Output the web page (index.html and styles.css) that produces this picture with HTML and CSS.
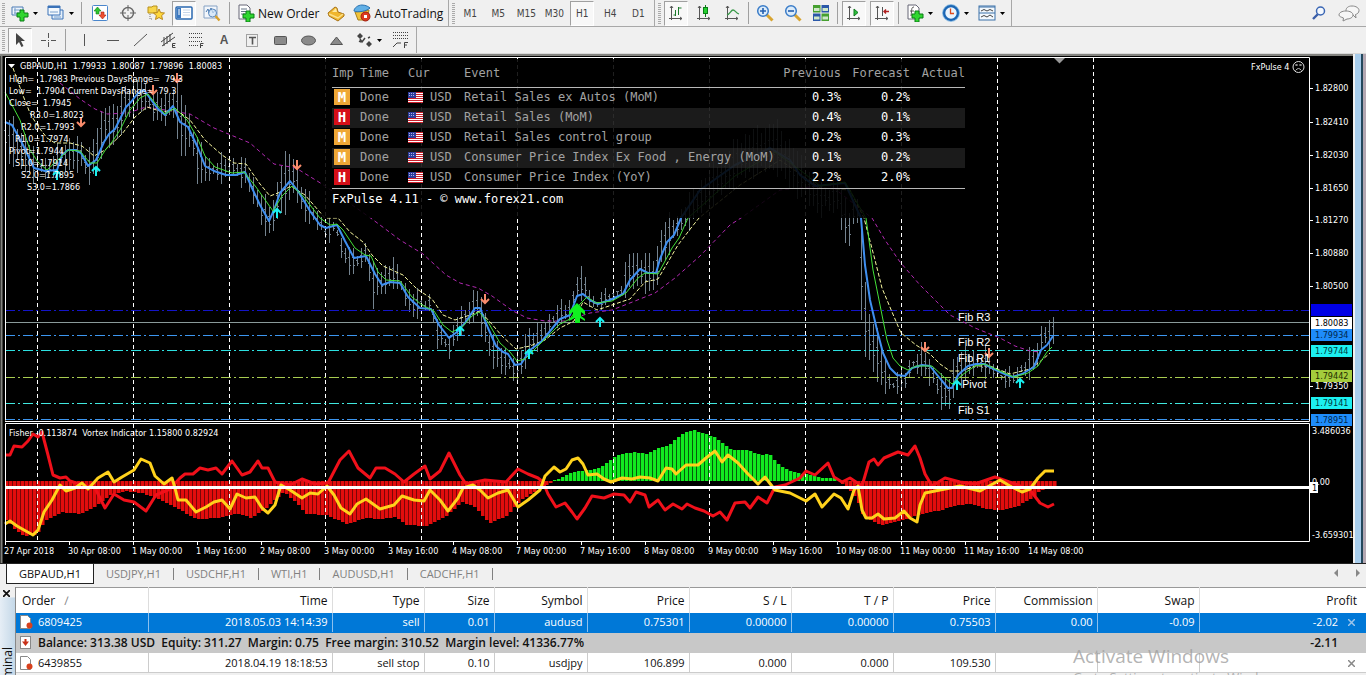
FILE: index.html
```html
<!DOCTYPE html>
<html lang="en">
<head>
<meta charset="utf-8">
<title>GBPAUD,H1</title>
<link rel="stylesheet" href="styles.css">
</head>
<body>
<header class="toolbars">
  <div class="bar">
    <div class="group">
      <i class="grip"></i>
      <button class="tool drop" aria-label="New chart"><svg class="ic" viewBox="0 0 18 18"><path d="M1 3h11v8H1z" fill="#eef5fc" stroke="#4a7ab5"/><path d="M3 6h7M3 9h5M4 4v6" stroke="#7aa0cc"/><path d="M9 6h4v3h4v4h-4v4H9v-4H6V9h3z" fill="#2fd62f" stroke="#0a7d16"/></svg><svg class="caret" viewBox="0 0 5 3"><path d="M0 0h5L2.500 3z"/></svg></button>
      <button class="tool drop" aria-label="Profiles"><svg class="ic" viewBox="0 0 18 18"><path d="M5 6h11v9H5z" fill="#e4effa" stroke="#3a72b8"/><path d="M1 2h12v9H1z" fill="#f3f8fd" stroke="#3a72b8"/><path d="M1 3h12" stroke="#3a72b8" stroke-width="2"/><path d="M3 8h8M7 13h7" stroke="#7aa0cc"/></svg><svg class="caret" viewBox="0 0 5 3"><path d="M0 0h5L2.500 3z"/></svg></button>
      <i class="sep"></i>
      <button class="tool" aria-label="Market Watch"><svg class="ic" viewBox="0 0 18 18"><rect x="1.500" y="1.500" width="15" height="15" rx="1" fill="#fff" stroke="#4a86cc"/><path d="M5 10V7H3l3.500-4L10 7H8v3z" fill="#2ec42e" stroke="#14801a" stroke-width=".6"/><path d="M10 8v3H8l3.500 4L15 11h-2V8z" fill="#f05030" stroke="#a82010" stroke-width=".6"/></svg></button>
      <button class="tool" aria-label="Data Window"><svg class="ic" viewBox="0 0 18 18" fill="none" stroke="#666"><circle cx="9" cy="9" r="5.500" stroke-width="1.400"/><path d="M9 1v6M9 11v6M1 9h6M11 9h6"/></svg></button>
      <button class="tool" aria-label="Navigator"><svg class="ic" viewBox="0 0 18 18"><path d="M1 3h4l1-1h4v7H1z" fill="#f8d64a" stroke="#b8901a"/><path d="M3 10v5h3" fill="none" stroke="#777" stroke-dasharray="1 1"/><path d="M12 5l1.600 3.600 3.900.4-2.900 2.600.9 3.900-3.500-2-3.500 2 .9-3.900L6.500 9l3.900-.4z" fill="#ffd83c" stroke="#b8861a"/></svg></button>
      <button class="tool on" aria-label="Terminal" aria-pressed="true"><svg class="ic" viewBox="0 0 18 18"><rect x="1" y="3" width="16" height="12" rx="1" fill="#fff" stroke="#2a68b0" stroke-width="1.500"/><path d="M2 4h4v10H2z" fill="#3a78c0"/><path d="M3 6h2M3 8h2M3 10h2" stroke="#fff"/><path d="M8 6h7M8 8.500h7M8 11h7" stroke="#b8cce4" stroke-width=".8"/></svg></button>
      <button class="tool" aria-label="Strategy Tester"><svg class="ic" viewBox="0 0 18 18"><path d="M1 2h13v12H1z" fill="#f2f6fb" stroke="#86a2c4"/><path d="M3 8l2-3 1 4 2-5 2 5 2-3" fill="none" stroke="#4878b0"/><circle cx="9.500" cy="9" r="4" fill="#cfe4f8" fill-opacity=".7" stroke="#5a88bc"/><path d="M12.500 12l4 4.500" stroke="#d8a02a" stroke-width="2.400"/></svg></button>
      <i class="sep"></i>
      <button class="tool label"><svg class="ic" viewBox="0 0 18 18"><path d="M2 1h8l3 3v11H2z" fill="#fff" stroke="#667"/><path d="M4 5h6M4 7.500h6M4 10h4" stroke="#678"/><path d="M9 7h4v3h4v4h-4v4H9v-4H6v-4h3z" fill="#2fd62f" stroke="#0a7d16"/></svg>New Order</button>
      <button class="tool" aria-label="MetaEditor"><svg class="ic" viewBox="0 0 18 18"><path d="M1 9l7-6 2 1 1 4 6 2v2l-6 5-9-5z" fill="#f0b62c" stroke="#a8741a"/><path d="M2 10l9 4 5-4" fill="none" stroke="#fbe08a" stroke-width="1.500"/><path d="M5 8l4-4 1 4z" fill="#fde9a0"/></svg></button>
      <button class="tool label"><svg class="ic" viewBox="0 0 18 18"><path d="M2 8l14-2-2 10H5z" fill="#f2c43a" stroke="#a8801a"/><path d="M1 7c0-3 4-6 8-6s7 2 8 3c-3 3-12 5-16 3z" fill="#62b0e6" stroke="#2a72b0"/><circle cx="12.500" cy="12.500" r="4.500" fill="#dc3a1e" stroke="#a02010"/><rect x="11" y="11" width="3" height="3" fill="#fff"/></svg>AutoTrading</button>
    </div>
    <div class="group">
      <i class="grip"></i>
      <button class="tool tf">M1</button><button class="tool tf">M5</button><button class="tool tf">M15</button><button class="tool tf">M30</button><button class="tool tf on" aria-pressed="true">H1</button><button class="tool tf">H4</button><button class="tool tf">D1</button>
    </div>
    <div class="group">
      <i class="grip"></i>
      <button class="tool on" aria-label="Bar chart" aria-pressed="true"><svg class="ic" viewBox="0 0 18 18" fill="none" stroke="#555"><path d="M4.500 2v14M2 14.500h13M3 4l1.500-2L6 4M13 13l2 1.500-2 1.500"/><path d="M8.500 6v6M6.500 11h2M11.500 3v8M11.500 4h3" stroke="#1c7a2c"/></svg></button>
      <button class="tool" aria-label="Candlesticks"><svg class="ic" viewBox="0 0 18 18" fill="none" stroke="#555"><path d="M4.500 2v14M2 14.500h13M3 4l1.500-2L6 4M13 13l2 1.500-2 1.500"/><path d="M10.500 1v12" stroke="#0a7d16"/><rect x="8.500" y="3.500" width="4" height="6" fill="#24d030" stroke="#0a7d16"/></svg></button>
      <button class="tool" aria-label="Line chart"><svg class="ic" viewBox="0 0 18 18" fill="none" stroke="#555"><path d="M4.500 2v14M2 14.500h13M3 4l1.500-2L6 4M13 13l2 1.500-2 1.500"/><path d="M4 11c3-1 4-5 6-5s3 3 6 4" stroke="#3a9a4a" stroke-width="1.300"/></svg></button>
      <i class="sep thin"></i>
      <button class="tool" aria-label="Zoom in"><svg class="ic" viewBox="0 0 18 18"><path d="M10.500 10.500l6 6" stroke="#d8a430" stroke-width="3"/><circle cx="7" cy="7" r="5.300" fill="#dcecfa" stroke="#3a7cc8" stroke-width="1.500"/><path d="M4 7h6M7 4v6" stroke="#2460b0" stroke-width="1.600"/></svg></button>
      <button class="tool" aria-label="Zoom out"><svg class="ic" viewBox="0 0 18 18"><path d="M10.500 10.500l6 6" stroke="#d8a430" stroke-width="3"/><circle cx="7" cy="7" r="5.300" fill="#dcecfa" stroke="#3a7cc8" stroke-width="1.500"/><path d="M4 7h6" stroke="#2460b0" stroke-width="1.600"/></svg></button>
      <button class="tool" aria-label="Tile windows"><svg class="ic" viewBox="0 0 18 18"><path d="M1 1h7.500v7.500H1zM9.500 9.500H17V17H9.500z" fill="#46a030"/><path d="M9.500 1H17v7.500H9.500zM1 9.500h7.500V17H1z" fill="#2a58a8"/><path d="M2 4h5.500v3H2zM10.500 4H16v3h-5.500zM2 12.500h5.500v3H2zM10.500 12.500H16v3h-5.500z" fill="#cfe8c8"/></svg></button>
      <i class="sep thin"></i>
      <button class="tool on" aria-label="Auto scroll" aria-pressed="true"><svg class="ic" viewBox="0 0 18 18" fill="none" stroke="#555"><path d="M4.500 2v14M2 14.500h13M3 4l1.500-2L6 4M13 13l2 1.500-2 1.500"/><path d="M9 5l4 3.500L9 12z" fill="#2cc03a" stroke="#127a20"/></svg></button>
      <button class="tool on" aria-label="Chart shift" aria-pressed="true"><svg class="ic" viewBox="0 0 18 18" fill="none" stroke="#555"><path d="M4.500 2v14M2 14.500h13M3 4l1.500-2L6 4M13 13l2 1.500-2 1.500M9.500 3v9"/><path d="M11 7.500h5M13 5.500l-2 2 2 2" stroke="#b02020" stroke-width="1.400"/></svg></button>
      <i class="sep thin"></i>
      <button class="tool drop" aria-label="Indicators"><svg class="ic" viewBox="0 0 18 18"><path d="M2 1h8l3 3v11H2z" fill="#fff" stroke="#667"/><path d="M8 3c-3 0-2 3-3 9M4 7h4" fill="none" stroke="#555"/><path d="M9 7h4v3h4v4h-4v4H9v-4H6v-4h3z" fill="#2fd62f" stroke="#0a7d16"/></svg><svg class="caret" viewBox="0 0 5 3"><path d="M0 0h5L2.500 3z"/></svg></button>
      <button class="tool drop" aria-label="Periods"><svg class="ic" viewBox="0 0 18 18"><circle cx="9" cy="9" r="7" fill="#eaf4fd" stroke="#1c66b4" stroke-width="2.600"/><circle cx="9" cy="9" r="8.400" fill="none" stroke="#6aaade" stroke-width=".7"/><path d="M8.500 4.500V9.500H12" fill="none" stroke="#e04a1c" stroke-width="1.300"/></svg><svg class="caret" viewBox="0 0 5 3"><path d="M0 0h5L2.500 3z"/></svg></button>
      <button class="tool drop" aria-label="Templates"><svg class="ic" viewBox="0 0 18 18"><rect x="1" y="2" width="16" height="14" fill="#f4f9fd" stroke="#3a70a8"/><path d="M1 3h16M1 9h16" stroke="#3a70a8"/><path d="M3 7l3-1.500L9 7l3-1.500L15 7M3 13l3-1.500L9 13l3-2 3 2" fill="none" stroke="#444"/></svg><svg class="caret" viewBox="0 0 5 3"><path d="M0 0h5L2.500 3z"/></svg></button>
    </div>
    <div class="right">
      <button class="tool" aria-label="Search"><svg class="ic" viewBox="0 0 18 18" fill="none"><path d="M8 10l-5 5" stroke="#3a5ea8" stroke-width="2.400"/><circle cx="10.500" cy="7" r="4" fill="#f4f8fd" stroke="#3a66b4" stroke-width="1.500"/></svg></button>
      <button class="tool" aria-label="Community"><svg class="ic big" viewBox="0 0 22 18" fill="#f6f6f6" stroke="#888"><path d="M14 2c4 0 7 2 7 4.500S19 10 17.500 10.500L18 14l-3-3c-5 0-7-2-7-4.500S10 2 14 2z"/><path d="M8 7c4 0 7 1.600 7 4s-3 4-6 4l-4 2 .5-3C3 13 1 12.500 1 11c0-2.400 3-4 7-4z"/></svg></button>
    </div>
  </div>
  <div class="bar">
    <div class="group">
      <i class="grip"></i>
      <button class="tool on" aria-label="Cursor" aria-pressed="true"><svg class="ic" viewBox="0 0 18 18"><path d="M5 2v12l3-3 2.500 5 2-1L10 10h4z" fill="#444"/></svg></button>
      <button class="tool" aria-label="Crosshair"><svg class="ic" viewBox="0 0 18 18" stroke="#555"><path d="M9.500 2v5M9.500 11v5M2 9.500h5M12 9.500h5M9 9.500h1"/></svg></button>
      <i class="sep"></i>
      <button class="tool" aria-label="Vertical line"><svg class="ic" viewBox="0 0 18 18" stroke="#555"><path d="M9.500 3v12"/></svg></button>
      <button class="tool" aria-label="Horizontal line"><svg class="ic" viewBox="0 0 18 18" stroke="#555"><path d="M4 9.500h12"/></svg></button>
      <button class="tool" aria-label="Trendline"><svg class="ic" viewBox="0 0 18 18" stroke="#555"><path d="M3 15L16 3"/></svg></button>
      <button class="tool" aria-label="Equidistant channel"><svg class="ic" viewBox="0 0 18 18" stroke="#444" fill="none"><path d="M2 11L14 2M3 15L16 6M5 6v9M8 5v8M11 3v8"/><path d="M16.500 12.500h-3v4h3M13.500 14.500h2.500"/></svg></button>
      <button class="tool" aria-label="Fibonacci"><svg class="ic" viewBox="0 0 18 18" stroke="#444" fill="none"><path d="M2 2.500h14M2 6.500h14M2 10.500h14M2 14.500h9" stroke-dasharray="1 1"/><path d="M13.500 17v-4.500h3M13.500 14.500H16"/></svg></button>
      <button class="tool glyph">A</button>
      <button class="tool" aria-label="Text label"><svg class="ic" viewBox="0 0 18 18" stroke="#555" fill="none"><rect x="3.500" y="3.500" width="11" height="12" stroke-dasharray="1 1"/><path d="M6 6.500h7M9.500 6.500v7" stroke-width="1.600"/></svg></button>
      <button class="tool" aria-label="Rectangle"><svg class="ic" viewBox="0 0 18 18"><rect x="3.500" y="5.500" width="12" height="8" rx="1" fill="#8a8a8a" stroke="#555"/></svg></button>
      <button class="tool" aria-label="Ellipse"><svg class="ic" viewBox="0 0 18 18"><ellipse cx="9.500" cy="9.500" rx="7" ry="4.500" fill="#8a8a8a" stroke="#555"/></svg></button>
      <button class="tool" aria-label="Triangle"><svg class="ic" viewBox="0 0 18 18"><path d="M9.500 6L15.500 13.500h-12z" fill="#8a8a8a" stroke="#555"/></svg></button>
      <button class="tool drop" aria-label="Arrows"><svg class="ic" viewBox="0 0 18 18" fill="#444"><path d="M2 5l3-3 3 3-3 3zM11 13l3-3 3 3-3 3z"/><path d="M5 8l2 3 3-4M13 7l2-1M4 10l2 1" fill="none" stroke="#444" stroke-width="1.500"/></svg><svg class="caret" viewBox="0 0 5 3"><path d="M0 0h5L2.500 3z"/></svg></button>
      <button class="tool" aria-label="Fibonacci channel"><svg class="ic" viewBox="0 0 18 18" stroke="#444" fill="none"><path d="M2 1.500h15M2 4.500h15M2 7.500h15" stroke-dasharray="1 1"/><path d="M2 16l4-4h4M13.500 17v-5.500h3.500M13.500 14H16"/></svg></button>
    </div>
  </div>
</header>

<main class="chart">
  <svg class="plot" viewBox="0 54 1353 509" role="img" aria-label="GBPAUD H1 price chart">
    <defs>
      <g id="down"><path d="M0-5V3M-4 0L0 4L4 0" fill="none" stroke="#fa8c6c" stroke-width="2"/></g>
      <g id="up"><path d="M0 5V-3M-4 0L0-4L4 0" fill="none" stroke="#19f0f0" stroke-width="2"/></g>
    </defs>
    <rect x="0" y="54" width="1353" height="509" fill="#000"/>
    <path d="M0 55h1353M1.500 54v509" stroke="#83837f" stroke-width="2" fill="none"/>
    <g id="bars" stroke="#74838f"></g>
    <g id="hist"></g>
    <g id="grid" stroke="#fff" stroke-dasharray="4 3"></g>
    <g id="levels" fill="none" stroke-dasharray="10 3 2 3"></g>
    <g id="lines" fill="none" stroke-linejoin="round"></g>
    <path d="M5 487.500h1306" stroke="#fff" stroke-width="3"/>
    <g id="marks"></g>
    <path d="M577 303l8 8v4l-4-3v4l4 3v2l-5-3v5h-5v-5l-6 3v-2l4-3v-4l-4 3v-4z" fill="#10f020"/>
    <path d="M5.500 541V423.500H1309.500V541.500H5M5.500 420.500V57.500H1309.500V421.500H5" fill="none" stroke="#fff"/>
    <path d="M1054 58h11l-5.500 5.500z" fill="#999"/>
    <path d="M8 64h7l-3.500 4z" fill="#fff"/>
    <g fill="none" stroke="#ddd"><circle cx="1298.500" cy="67" r="5.500"/><path d="M1295.500 64l2 2m0-2l-2 2M1299.500 64l2 2m0-2l-2 2M1295.500 70.500q3-4 6 0" stroke-width=".8"/></g>
    <g class="small" id="labels"></g>
    <g class="fib" fill="#fff"><text x="958" y="321">Fib R3</text><text x="958" y="346">Fib R2</text><text x="958" y="362">Fib R1</text><text x="962" y="388">Pivot</text><text x="958" y="414">Fib S1</text></g>
  </svg>
  <section class="news">
    <table>
      <colgroup><col class="c-imp"><col class="c-time"><col class="c-cur"><col><col class="c-prev"><col class="c-fore"><col class="c-act"></colgroup>
      <thead><tr><th>Imp</th><th>Time</th><th>Cur</th><th>Event</th><th class="num">Previous</th><th class="num">Forecast</th><th class="num">Actual</th></tr></thead>
      <tbody id="news"></tbody>
    </table>
    <p>FxPulse 4.11 - © www.forex21.com</p>
  </section>
  <aside class="edge"></aside>
</main>

<nav class="tabs">
  <button class="tab active">GBPAUD,H1</button><button class="tab">USDJPY,H1</button><button class="tab">USDCHF,H1</button><button class="tab">WTI,H1</button><button class="tab">AUDUSD,H1</button><button class="tab">CADCHF,H1</button>
  <span class="scroll"><svg viewBox="0 0 26 8"><path d="M4 0v8L0 4zM22 0v8l4-4z" fill="#888"/></svg></span>
</nav>

<section class="terminal">
  <div class="side"><button class="close" aria-label="Close"><svg viewBox="0 0 6 6"><path d="M0 0l6 6M6 0L0 6" stroke="#111" stroke-width="1.500"/></svg></button><div class="side-title">Terminal</div></div>
  <table class="orders">
    <colgroup><col class="w-order"><col class="w-time"><col class="w-type"><col class="w-size"><col class="w-sym"><col class="w-p"><col class="w-p"><col class="w-p"><col class="w-p"><col class="w-p"><col class="w-p"><col></colgroup>
    <thead><tr><th class="first">Order <span class="sort">∕</span></th><th>Time</th><th>Type</th><th>Size</th><th>Symbol</th><th>Price</th><th>S / L</th><th>T / P</th><th>Price</th><th>Commission</th><th>Swap</th><th class="last">Profit</th></tr></thead>
    <tbody>
      <tr class="sel"><td class="first"><svg class="doc" viewBox="0 0 14 14"><path d="M1.500.5h7l3 3v10h-10z" fill="#fff" stroke="#888"/><circle cx="10.500" cy="10.500" r="3" fill="#d8401c"/></svg>6809425</td><td>2018.05.03 14:14:39</td><td>sell</td><td>0.01</td><td>audusd</td><td>0.75301</td><td>0.00000</td><td>0.00000</td><td>0.75503</td><td>0.00</td><td>-0.09</td><td class="pl">-2.02<svg class="x" viewBox="0 0 7 7"><path d="M0 0l7 7M7 0L0 7" stroke="#9cc4ea" stroke-width="1.500"/></svg></td></tr>
      <tr class="bal"><td class="first" colspan="11"><svg class="doc" viewBox="0 0 14 14"><rect x="1.500" y=".5" width="10" height="12" fill="#fff" stroke="#888"/><path d="M5.500 3h2v2.500H10L6.500 10 3 5.500h2.500z" fill="#c83018"/></svg>Balance: 313.38 USD&nbsp; Equity: 311.27&nbsp; Margin: 0.75&nbsp; Free margin: 310.52&nbsp; Margin level: 41336.77%</td><td class="pl">-2.11</td></tr>
      <tr><td class="first"><svg class="doc" viewBox="0 0 14 14"><path d="M1.500.5h7l3 3v10h-10z" fill="#fff" stroke="#888"/><circle cx="10.500" cy="10.500" r="3" fill="#d8401c"/></svg>6439855</td><td>2018.04.19 18:18:53</td><td>sell stop</td><td>0.10</td><td>usdjpy</td><td>106.899</td><td>0.000</td><td>0.000</td><td>109.530</td><td></td><td></td><td class="pl"><svg class="x" viewBox="0 0 7 7"><path d="M0 0l7 7M7 0L0 7" stroke="#888" stroke-width="1.500"/></svg></td></tr>
    </tbody>
  </table>
  <div class="watermark"><b>Activate Windows</b><span>Go to Settings to activate Windows.</span></div>
</section>
<script src="chart.js"></script>
</body>
</html>
```
FILE: styles.css
```css
* { box-sizing: border-box; }
body { margin: 0; height: 100vh; overflow: hidden; display: flex; flex-direction: column; background: #f0f0f0; color: #111; font: 12px "Open Sans", sans-serif; }
button { font: inherit; color: inherit; background: none; border: 0; padding: 0; }

.toolbars { flex: none; }
.bar { display: flex; height: 27px; border-bottom: 1px solid #a8a8a8; }
.bar + .bar { border-bottom-color: #d8d8d8; }
.group { display: flex; align-items: center; padding-right: 2px; margin-right: 1px; border-right: 1px solid #a8a8a8; }
.grip { width: 3px; height: 21px; margin: 0 1px 0 2px; background: repeating-linear-gradient(#aaa 0 1px, #f0f0f0 1px 2px); }
.sep { width: 1px; height: 22px; margin: 0 4px 0 3px; background: #a0a0a0; }
.sep.thin { margin: 0 2px; }
.tool { flex: none; width: 28px; height: 25px; display: flex; align-items: center; justify-content: center; }
.tool.on { background: #f8f8f8; border: 1px solid #a0a0a0; border-right-color: #fff; border-bottom-color: #fff; width: 24px; margin: 0 2px; }
.tool.drop { width: 36px; justify-content: flex-start; padding-left: 5px; }
.tool.label { width: auto; padding: 0 3px; gap: 3px; }
.tool.tf { font: 10px "DejaVu Sans Condensed", sans-serif; color: #444; }
.tool.glyph { font: bold 12px "Liberation Sans", sans-serif; color: #555; }
.ic { width: 18px; height: 18px; flex: none; }
.ic.big { width: 22px; }
.caret { width: 5px; height: 3px; margin-left: 4px; }
.right { margin-left: auto; display: flex; align-items: center; gap: 2px; padding-right: 3px; }

.chart { position: relative; flex: none; display: flex; background: #000; }
.plot { flex: 1; min-width: 0; display: block; }
.edge { flex: none; width: 13px; background: linear-gradient(90deg, #f2f2f2 0 2px, #a8cdec 2px 8px, #24485c 8px 10px, #b4a8b2 10px); }
.small { font: 9px "DejaVu Sans Condensed", "DejaVu Sans", sans-serif; }
.fib { font: 11px "Liberation Sans", sans-serif; }

.news { position: absolute; left: 322px; top: 5px; width: 655px; height: 159px; padding: 0 12px 0 10px; background: rgba(0, 0, 0, .88); color: #a2a2a2; font: 12px/18px "DejaVu Sans Mono", monospace; }
.news table { width: 100%; table-layout: fixed; border-collapse: collapse; border-bottom: 1px solid #b8b8b8; }
.news th { height: 28px; padding: 0; font-weight: normal; text-align: left; border-bottom: 1px solid #b8b8b8; white-space: nowrap; }
.news td { height: 20px; padding: 0 0 2px; white-space: nowrap; }
.news tbody tr:nth-child(even) { background: rgba(60, 60, 60, .45); }
.news .num { text-align: right; }
.news td.num { color: #fff; }
.news p { margin: 0; color: #fff; line-height: 20px; }
.c-imp { width: 28px; }
.c-time { width: 48px; }
.c-cur { width: 56px; }
.c-prev { width: 62px; }
.c-fore { width: 69px; }
.c-act { width: 55px; }
.badge { display: block; width: 16px; height: 16px; margin: 1px 0 0 2px; color: #fff; background: #efa736; font: bold 14px/16px "DejaVu Sans Mono", monospace; text-align: center; }
.badge.high { background: #d60f18; }
.flag { width: 15px; height: 11px; margin-right: 7px; vertical-align: -2px; shape-rendering: crispEdges; }

.tabs { flex: none; display: flex; align-items: flex-start; height: 24px; padding-left: 6px; border-top: 1px solid #222; }
.tab { height: 20px; padding: 0 13px 0 12px; color: #808080; font: 11px/20px "Open Sans", sans-serif; }
.tab:not(.active) { background: linear-gradient(#808080, #808080) right 4px / 1px 12px no-repeat; }
.tab.active { color: #111; background: #fff; border: 1px solid #222; border-top: 0; line-height: 18px; padding: 0 12px; }
.scroll { margin: 5px 6px 0 auto; }
.scroll svg { display: block; width: 26px; height: 8px; }

.terminal { flex: 1; min-height: 0; position: relative; display: flex; overflow: hidden; }
.side { flex: none; width: 16px; border-right: 1px solid #888; display: flex; flex-direction: column; }
.close { height: 15px; padding: 3px 0 0 3px; }
.close svg { display: block; width: 7px; height: 7px; }
.side-title { flex: none; padding: 0 0 50px; background: linear-gradient(90deg, #c4d8e8, #e6eef6); writing-mode: vertical-rl; transform: rotate(180deg); font-size: 12px; line-height: 15px; }
.orders { flex: 1; width: 100%; table-layout: fixed; border-collapse: collapse; background: #fff; align-self: flex-start; border-top: 1px solid #999; }
.orders th { height: 25px; font-weight: normal; text-align: right; padding: 0 4px 0 0; border-right: 1px solid #ddd; white-space: nowrap; }
.orders td { height: 20px; padding: 0 4px 0 0; text-align: right; border-right: 1px solid #ccc; border-bottom: 1px solid #ccc; line-height: 18px; font-size: 11px; white-space: nowrap; }
.orders th.first { text-align: left; padding-left: 6px; }
.orders td.first { text-align: left; padding-left: 3px; }
.orders th.last { padding-right: 9px; border-right: 0; }
.orders td.pl { padding-right: 11px; border-right: 0; }
.orders .sel td { background: #0078d7; color: #fff; border-color: #0078d7; border-right-color: #8cc0ee; }
.orders .bal td { background: #c8c8c8; font-weight: 600; font-size: 12px; border-color: #c8c8c8; }
.orders .bal td.pl { padding-right: 28px; }
.sort { color: #888; margin-left: 6px; }
.doc { width: 14px; height: 14px; margin-right: 5px; vertical-align: -3px; }
.x { width: 7px; height: 7px; margin-left: 10px; }
.w-order { width: 132px; }
.w-time { width: 184px; }
.w-type { width: 92px; }
.w-size { width: 70px; }
.w-sym { width: 93px; }
.w-p { width: 102px; }
.watermark { position: absolute; right: 81px; top: 57px; width: 212px; color: rgba(160, 160, 160, .8); white-space: nowrap; }
.watermark b { display: block; font: 19px/24px "Open Sans", sans-serif; }
.watermark span { font: 13px/18px "Open Sans", sans-serif; }
```
FILE: chart.js
```js
const NS = "http://www.w3.org/2000/svg";
const $ = id => document.getElementById(id);
const add = (parent, name, attrs, text) => {
  const el = document.createElementNS(NS, name);
  for (const k in attrs) el.setAttribute(k, attrs[k]);
  if (text !== undefined) el.textContent = text;
  parent.appendChild(el);
};
const parse = s => s.trim().split(/\s+/).map(p => p.split(",").map(Number));
const at = (pts, x, col = 1) => {
  for (let i = 1; i < pts.length; i++) if (x <= pts[i][0]) {
    const a = pts[i - 1], b = pts[i];
    return a[col] + (b[col] - a[col]) * (x - a[0]) / (b[0] - a[0]);
  }
  return pts[pts.length - 1][col];
};

/* time grid */
for (let x = 37.5; x < 1100; x += 96) add($("grid"), "path", { d: `M${x} 58V421M${x} 424V541` });

/* price bars: x, high, low */
const range = parse("5,115,160 20,125,170 34,150,180 50,160,178 60,140,172 80,138,170 88,150,186 96,130,172 105,100,150 115,108,145 125,82,125 140,78,110 155,95,120 165,95,125 175,80,120 180,90,160 190,115,150 198,140,185 210,160,182 230,155,180 245,160,185 255,180,210 268,205,240 274,195,230 282,155,215 294,153,195 300,180,215 312,200,225 325,222,240 336,220,235 342,240,265 354,252,275 366,240,265 373,265,305 385,265,295 393,258,285 402,275,298 410,290,318 430,295,312 437,320,345 449,335,358 457,315,340 470,295,325 477,288,318 482,300,338 490,330,365 500,345,372 514,355,382 520,350,378 528,325,360 540,325,345 558,302,325 570,300,320 577,270,300 583,270,296 592,295,312 602,292,306 620,285,298 630,248,290 645,255,290 655,255,295 662,220,265 675,215,240 700,180,215 740,135,180 775,120,170 790,140,190 820,185,215 838,180,212 846,200,252 850,205,255 852,200,222 858,200,225 861,220,320 866,300,365 874,320,375 882,350,390 890,375,395 905,370,388 912,355,372 922,345,375 933,365,390 940,375,405 948,380,412 955,350,395 965,350,380 975,350,375 985,350,375 1000,368,382 1012,370,388 1022,360,378 1035,345,375 1042,322,350 1053,320,345");
const wave = n => Math.round(Math.sin(n * 2.3) * 4 + Math.sin(n * 5.1) * 3);
let d = "";
for (let x = 5, i = 0; x <= 1053; x += 4, i++) {
  const hi = Math.round(at(range, x, 1)) + 2 + wave(i), lo = Math.round(at(range, x, 2)) - 2 + wave(i + 40);
  const open = Math.round(hi + (lo - hi) * .35), close = Math.round(hi + (lo - hi) * .65);
  d += `M${x + .5} ${hi}V${Math.max(lo, hi + 5)}M${x - 1} ${open + .5}h1M${x + 1} ${close + .5}h1`;
}
add($("bars"), "path", { d });

/* Fisher histogram around y = 481 */
const env = parse("5,520 14,530 22,536 35,535 44,520 60,512 80,514 95,506 110,494 125,491 140,493 160,500 175,508 195,519 215,518 235,513 250,518 265,508 282,492 292,500 305,514 325,515 345,524 365,518 380,519 395,517 405,525 425,526 445,516 460,502 473,507 488,523 505,516 520,500 540,487 550,482 552,480 560,478 570,472 585,470 596,469 606,462 616,455 632,452 645,454 655,449 668,445 680,434 692,430 705,434 715,438 730,450 745,450 760,455 768,454 778,465 790,471 803,474 820,478 835,478 838,483 845,486 855,498 862,517 880,525 900,520 920,514 940,510 955,505 970,504 985,509 1000,510 1015,507 1030,498 1040,490 1054,486");
for (let x = 5; x <= 1053; x += 4) {
  const y = Math.round(at(env, x)), green = y < 481, top = Math.min(y, 481), height = Math.abs(y - 481);
  add($("hist"), "rect", { x, y: top, width: 4, height, fill: green ? "#045c0a" : "#7a0606" });
  add($("hist"), "rect", { x, y: top, width: 3, height, fill: green ? "#12ea20" : "#e20d0d" });
}

/* horizontal levels */
[[310.5, "#1414c8"], [335.5, "#3c96f0"], [350.5, "#2ce0e0"], [377.5, "#a8cc50"], [403.5, "#40e8e0"], [419.5, "#3c96f0"]]
  .forEach(([y, c]) => add($("levels"), "path", { d: `M5 ${y}H1309`, stroke: c }));
add($("levels"), "path", { d: "M5 322.5H1309", stroke: "#8a9a9a", "stroke-dasharray": "none" });

/* averages and vortex lines */
const series = [
  ["#b028b0", 1, "4 3", "60,83 80,99 95,109 107,114 128,113 146,107 165,110 190,114 214,128 250,143 274,164 296,168 322,184 345,200 372,219 400,240 423,254 446,275 460,283 478,288 492,296 513,311 527,318 545,321 565,321 590,313 612,310 635,301 655,293 675,278 700,256 730,225 741,218 780,190 830,185 872,218 885,240 900,262 920,285 950,315 975,328 1000,338 1015,346 1030,351 1040,352"],
  ["#f8f8a0", 1, "4 2", "13,68 22,93 30,113 37,125 47,138 55,143 70,143 82,146 94,156 105,150 122,134 135,117 147,107 163,112 175,109 190,120 205,140 222,155 234,163 246,164 260,184 270,196 278,193 291,186 305,195 325,218 338,218 350,232 363,242 372,255 383,266 403,275 417,289 432,299 443,315 455,320 470,315 480,311 490,322 502,336 516,349 530,346 545,340 560,328 574,321 583,302 597,310 612,305 630,299 645,282 658,279 668,262 678,245 691,228 699,218 740,185 780,160 820,188 850,190 864,218 875,260 882,288 892,312 901,333 916,345 930,354 940,364 950,371 962,371 975,366 990,366 1010,374 1030,369 1042,360 1050,353"],
  ["#3f8ff0", 2, "none", "5,122 12,125 22,143 34,168 45,171 57,170 62,155 68,150 75,150 81,153 88,166 96,160 104,142 109,134 115,129 121,117 126,107 131,102 138,93 144,90 152,101 158,109 165,115 173,106 180,122 188,127 198,148 205,166 214,171 226,175 236,175 245,172 252,188 260,205 269,221 274,210 280,193 290,181 298,191 310,211 320,225 326,228 337,225 345,241 354,258 366,256 375,274 382,285 390,282 400,283 408,297 420,308 431,309 439,325 449,338 457,332 465,323 475,308 480,308 488,328 496,346 503,352 508,354 515,365 521,364 530,350 542,341 555,325 560,319 570,315 577,296 583,294 590,300 598,304 610,300 623,294 630,280 640,269 648,273 656,273 660,259 667,242 674,235 681,218 700,190 735,165 770,148 790,160 800,175 815,186 845,183 855,205 861,218 865,265 870,300 877,330 883,353 890,368 897,375 905,376 912,368 922,365 930,366 938,376 948,388 952,388 958,375 968,366 976,364 984,364 992,368 1000,372 1012,377 1022,374 1034,367 1041,350 1047,345 1053,336"],
  ["#44e038", 1, "none", "5,92 20,120 30,150 38,162 47,170 60,158 68,150 80,151 90,163 97,163 106,149 112,142 120,130 130,110 140,98 148,94 155,103 165,114 175,108 187,120 197,137 205,156 215,167 232,173 244,172 256,187 273,211 282,196 292,186 304,197 320,218 330,225 337,224 343,230 355,248 365,255 371,256 378,272 386,280 400,281 412,297 422,305 434,311 443,325 452,332 462,327 472,316 479,312 488,322 500,343 510,352 517,361 525,359 537,347 548,336 560,324 570,319 580,304 587,297 596,303 612,301 626,293 638,278 645,273 658,274 664,263 672,248 679,238 688,218 735,176 775,152 800,170 820,186 845,182 866,218 873,270 881,310 887,340 893,358 900,366 908,370 916,366 932,366 945,378 952,384 962,375 975,366 985,364 1000,371 1014,377 1028,373 1038,366 1047,352 1052,347"],
  ["#f0101a", 3, "none", "5,455 10,455 14,446 22,447 28,441 33,434 38,437 42,432 48,455 53,475 60,478 66,477 70,481 76,483 95,488 105,508 114,494 124,500 134,502 146,511 156,495 170,489 180,478 185,474 193,474 200,468 208,470 216,468 222,474 232,461 242,475 250,472 258,461 262,468 268,468 275,482 290,485 302,479 315,484 328,483 340,460 349,451 358,468 370,478 376,468 385,468 395,474 404,482 414,474 425,466 430,479 440,471 449,453 460,475 466,484 485,480 506,482 518,469 528,474 538,478 543,482 548,494 556,507 565,503 572,512 577,519 585,508 592,496 604,498 614,494 624,495 630,502 636,492 645,495 649,507 658,500 665,510 673,504 682,509 687,504 695,508 704,511 713,516 720,512 727,520 735,503 745,502 750,508 758,497 767,503 775,487 785,485 800,478 806,471 815,475 828,463 834,477 842,482 850,478 862,486 869,462 874,459 878,465 884,458 898,452 908,455 915,446 920,458 925,474 932,486 945,478 960,482 975,484 995,477 1015,484 1030,490 1040,503 1048,507 1054,504"],
  ["#ffd21c", 3, "none", "5,524 10,521 17,526 24,530 33,535 38,530 44,512 52,500 60,485 66,491 75,488 82,483 88,489 98,478 108,472 114,482 122,477 134,470 141,459 150,463 155,476 164,484 172,478 175,488 178,500 186,500 196,512 206,507 214,502 222,500 230,509 237,494 246,498 255,497 262,508 268,513 275,505 281,485 290,490 302,498 310,493 318,494 327,486 334,495 341,508 350,514 357,504 366,499 380,509 394,505 402,496 414,500 424,501 430,490 440,500 448,511 458,498 463,488 473,485 480,490 488,498 498,493 508,490 518,507 528,500 540,490 545,476 554,467 560,472 566,469 572,460 578,458 583,464 588,475 597,474 604,479 611,482 622,478 632,479 640,477 650,478 658,481 666,468 672,469 676,474 686,465 698,465 706,458 715,451 722,462 728,455 738,463 748,474 758,484 765,477 775,490 790,493 806,501 815,494 822,507 834,494 841,498 848,509 854,490 858,486 862,510 866,518 872,518 878,514 884,519 895,518 904,511 910,518 917,522 920,505 925,493 940,490 960,486 980,491 1000,480 1010,486 1022,492 1030,489 1038,478 1045,471 1054,471"]
];
series.forEach(([stroke, width, dash, points]) =>
  add($("lines"), "polyline", { points, stroke, "stroke-width": width, "stroke-dasharray": dash }));

/* signal arrows */
parse("153,90 177,78 81,122 297,165 485,299 925,347 989,353").forEach(([x, y]) => add($("marks"), "use", { href: "#down", x, y }));
parse("57,175 96,171 277,213 460,331 529,354 600,322 957,385 1020,383").forEach(([x, y]) => add($("marks"), "use", { href: "#up", x, y }));

/* captions */
const put = (x, y, t, fill = "#fff") => add($("labels"), "text", { x, y: y + 3, fill }, t.replace(/  /g, "\u00a0\u00a0"));
[[20, 66, "GBPAUD,H1  1.79933  1.80087  1.79896  1.80083"], [9, 79, "High=  1.7983 Previous DaysRange=  79.3"],
 [9, 91, "Low=  1.7904 Current DaysRange=  79.3"], [9, 103, "Close=  1.7945"], [30, 115, "R3.0=1.8023"], [21, 127, "R2.0=1.7993"],
 [15, 139, "R1.0=1.7974"], [9, 151, "Pivot=1.7944"], [15, 163, "S1.0=1.7914"], [21, 175, "S2.0=1.7895"], [27, 187, "S3.0=1.7866"],
 [9, 433, "Fisher -0.113874  Vortex Indicator 1.15800 0.82924"], [1251, 67, "FxPulse 4"]].forEach(a => put(...a));
["27 Apr 2018", "30 Apr 08:00", "1 May 00:00", "1 May 16:00", "2 May 08:00", "3 May 00:00", "3 May 16:00", "4 May 08:00", "7 May 00:00",
 "7 May 16:00", "8 May 08:00", "9 May 00:00", "9 May 16:00", "10 May 08:00", "11 May 00:00", "11 May 16:00", "14 May 08:00"].forEach((t, i) => {
  put(4 + 64 * i, 551, t);
  add($("labels"), "path", { d: `M${5.5 + 64 * i} 542v3`, stroke: "#fff" });
});
[[88, "1.82800"], [122, "1.82410"], [155, "1.82030"], [188, "1.81650"], [220, "1.81270"], [253, "1.80880"], [286, "1.80500"], [386, "1.79350"]].forEach(([y, t]) => {
  put(1315, y, t);
  add($("labels"), "path", { d: `M1310 ${y + .5}h3`, stroke: "#fff" });
});
[[310, "#0000e6", "", "#0000e6"], [323, "#fff", "1.80083", "#000"], [335, "#1e8cfa", "1.79934", "#00284c"], [351, "#1cf0f0", "1.79744", "#00383c"],
 [376, "#a4cc3c", "1.79442", "#242c00"], [403, "#1cf0f0", "1.79141", "#00383c"], [420, "#1e8cfa", "1.78951", "#00284c"]].forEach(([y, bg, t, fg]) => {
  add($("labels"), "rect", { x: 1311, y: y - 6, width: 41, height: 12, fill: bg });
  if (t) put(1315, y, t, fg);
});
[[431, "3.486036"], [482, "0.00"], [535, "-3.659301"]].forEach(([y, t]) => put(1312, y, t));
add($("labels"), "rect", { x: 1310, y: 482, width: 8, height: 11, fill: "#fff" });
put(1312, 488, "1", "#000");

/* economic calendar */
const flag = `<svg class="flag" viewBox="0 0 15 11"><path fill="#fff" d="M0 0h15v11H0z"/><path stroke="#c8202c" d="M0 .5h15M0 2.500h15M0 4.500h15M0 6.500h15M0 8.500h15M0 10.500h15"/><path fill="#2c3c9c" d="M0 0h8v6H0z"/><path stroke="#aab4e4" stroke-dasharray="1 1" d="M1 1.500h6M1 3.500h6"/></svg>`;
$("news").innerHTML = [["M", "Retail Sales ex Autos (MoM)", "0.3%", "0.2%"], ["H", "Retail Sales (MoM)", "0.4%", "0.1%"],
  ["M", "Retail Sales control group", "0.2%", "0.3%"], ["M", "Consumer Price Index Ex Food , Energy (MoM)", "0.1%", "0.2%"],
  ["H", "Consumer Price Index (YoY)", "2.2%", "2.0%"]].map(([k, name, prev, fore]) =>
  `<tr><td><span class="badge${k === "H" ? " high" : ""}">${k}</span></td><td>Done</td><td>${flag}USD</td><td>${name}</td><td class="num">${prev}</td><td class="num">${fore}</td><td></td></tr>`).join("");
```
